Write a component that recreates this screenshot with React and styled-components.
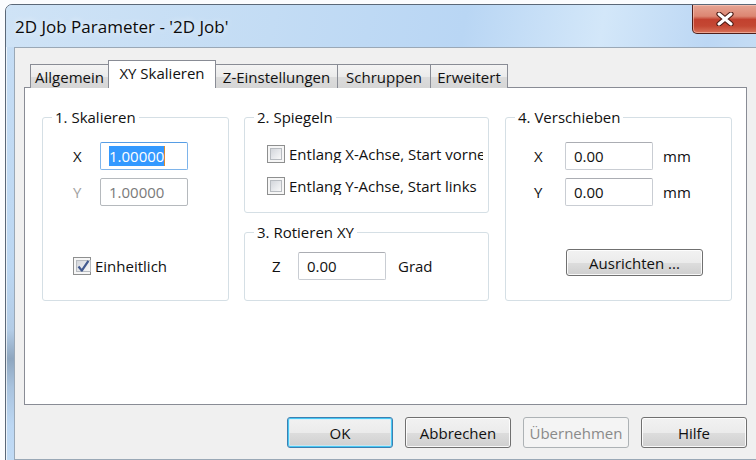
import React from "react";
import styled, { createGlobalStyle, css } from "styled-components";

const GlobalStyle = createGlobalStyle`
  html, body { margin: 0; padding: 0; background: #ffffff; }
  body {
    font-family: "Open Sans", "Noto Sans", "DejaVu Sans", sans-serif;
    font-size: 15px;
    color: #111;
  }
  * { box-sizing: border-box; }
`;

const Screen = styled.div`
  width: 756px;
  height: 460px;
  overflow: hidden;
  padding: 4px 0 0 5px;
  background: #fbfcfe;
`;

const Window = styled.div`
  width: 764px;
  height: 480px;
  border: 1px solid #5b6878;
  border-radius: 7px 7px 0 0;
  padding: 0 8px 0 8px;
  display: flex;
  flex-direction: column;
  background: linear-gradient(
    180deg,
    #c7def5 0%,
    #bcd7f2 55%,
    #b3cce6 68%,
    #8ea6bf 74%,
    #a9c3de 80%,
    #bcd7f3 88%,
    #c4ddf5 100%
  );
  box-shadow: inset 1px 1px 0 rgba(255, 255, 255, 0.7);
`;

const TitleBar = styled.div`
  height: 42px;
  display: flex;
  align-items: flex-start;
  margin: 0 -8px 0 -8px;
  padding-left: 9px;
  border-radius: 6px 6px 0 0;
  background: linear-gradient(
    100deg,
    #cfe3f6 0%,
    #c3dcf4 35%,
    #b9d6f4 60%,
    #d3e7f9 78%,
    #bcd7f4 92%,
    #c6ddf4 100%
  );
`;

const Title = styled.div`
  margin-top: 10px;
  font-size: 17px;
  color: #0b0b0b;
  text-shadow: 0 0 6px rgba(255, 255, 255, 0.9);
`;

const CloseButton = styled.div`
  margin-left: auto;
  margin-right: 8px;
  width: 68px;
  height: 29px;
  border: 1px solid #4f1f1a;
  border-top: none;
  border-radius: 0 0 5px 5px;
  display: flex;
  align-items: center;
  justify-content: center;
  padding-right: 2px;
  background: linear-gradient(
    180deg,
    #e6a493 0%,
    #dc8672 40%,
    #c2412f 52%,
    #c44733 75%,
    #d8735a 100%
  );
  box-shadow: inset 0 0 0 1px rgba(255, 210, 195, 0.55);
`;

const Client = styled.div`
  height: 413px;
  border: 1px solid #9aa8b6;
  background: #f0f0f0;
  padding: 12px 12px 0 9px;
  display: flex;
  flex-direction: column;
`;

const TabStrip = styled.div`
  display: flex;
  align-items: flex-end;
  height: 28px;
  padding-left: 6px;
  margin-bottom: -1px;
  position: relative;
  z-index: 1;
`;

const Tab = styled.div`
  width: ${(p) => p.$w}px;
  margin-right: -1px;
  height: 24px;
  border: 1px solid #898c95;
  border-bottom: none;
  display: flex;
  align-items: center;
  justify-content: center;
  color: #111;
  white-space: nowrap;
  background: linear-gradient(180deg, #f4f4f4 0%, #ebebeb 50%, #dcdcdc 51%, #d6d6d6 100%);
  ${(p) =>
    p.$active &&
    css`
      height: 28px;
      background: #ffffff;
      padding-bottom: 4px;
      position: relative;
      z-index: 2;
    `}
`;

const Panel = styled.div`
  height: 318px;
  border: 1px solid #898c95;
  background: #ffffff;
  padding: 20px 0 0 17px;
  display: grid;
  grid-template-columns: 187px 245px 228px;
  column-gap: 15px;
  align-items: start;
  & > :nth-child(3) { margin-left: 1px; }
`;

const Column = styled.div`
  display: flex;
  flex-direction: column;
  gap: 10px;
`;

const Group = styled.fieldset`
  margin: 0;
  padding: 0;
  min-width: 0;
  height: ${(p) => p.$h}px;
  border: 1px solid #d5dfe5;
  border-radius: 3px;
`;

const Legend = styled.legend`
  margin-left: 9px;
  padding: 0 3px;
  line-height: 18px;
  color: #111;
`;

const GroupBody = styled.div`
  padding: ${(p) => p.$pad};
`;

const FieldRow = styled.div`
  display: flex;
  align-items: center;
  height: 28px;
  & + & { margin-top: 8px; }
`;

const FieldLabel = styled.div`
  width: ${(p) => p.$w}px;
  color: ${(p) => (p.$disabled ? "#a2a2a2" : "#111")};
`;

const TextBox = styled.div`
  width: 88px;
  height: 28px;
  padding: 0 0 0 8px;
  display: flex;
  align-items: center;
  background: #fff;
  border: 1px solid #c9cdd3;
  border-top-color: #abadb3;
  border-radius: 2px;
  color: #111;
  ${(p) =>
    p.$focused &&
    css`
      border-color: #7eb4ea;
      border-top-color: #569de5;
    `}
  ${(p) =>
    p.$disabled &&
    css`
      border-color: #b5b9bd;
      color: #7a7a7a;
    `}
`;

const Selection = styled.span`
  background: #3399ff;
  color: #fff;
  line-height: 20px;
  border-right: 1px solid #e08a2c;
`;

const Unit = styled.div`
  margin-left: ${(p) => p.$gap}px;
  color: #111;
`;

const CheckRow = styled.div`
  display: flex;
  align-items: center;
  height: 18px;
  gap: 4px;
  margin-top: ${(p) => p.$mt || 0}px;
  white-space: nowrap;
  overflow: hidden;
`;

const CheckBox = styled.div`
  flex: none;
  width: 18px;
  height: 18px;
  border: 1px solid #8e8f8f;
  background: #f6f6f6;
  padding: 2px;
  display: flex;
`;

const CheckInner = styled.div`
  flex: 1;
  border: 1px solid #b7bbc0;
  background: linear-gradient(135deg, #d3d6db 0%, #e7e9ec 55%, #f8f8f8 100%);
  display: flex;
  align-items: center;
  justify-content: center;
  overflow: visible;
`;

const CheckText = styled.span`
  color: #111;
  overflow: hidden;
`;

const PushButton = styled.div`
  width: ${(p) => p.$w}px;
  height: ${(p) => p.$h}px;
  margin-top: ${(p) => p.$mt || 0}px;
  margin-left: ${(p) => p.$ml || 0}px;
  display: flex;
  align-items: center;
  justify-content: center;
  border: 1px solid #707070;
  border-radius: 3px;
  color: #111;
  background: linear-gradient(180deg, #f2f2f2 0%, #ebebeb 50%, #dddddd 51%, #cfcfcf 100%);
  box-shadow: inset 0 0 0 1px rgba(255, 255, 255, 0.85);
  ${(p) =>
    p.$default &&
    css`
      border-color: #3c7fb1;
      box-shadow: inset 0 0 0 1px #48c8f4, inset 0 0 0 2px rgba(200, 240, 255, 0.6);
    `}
  ${(p) =>
    p.$disabled &&
    css`
      border-color: #adb2b5;
      background: #f4f4f4;
      color: #8a8a8a;
      box-shadow: none;
    `}
`;

const ButtonBar = styled.div`
  display: flex;
  justify-content: flex-end;
  gap: 12px;
  margin-top: 12px;
`;

const CloseGlyph = () => (
  <svg width="20" height="14" viewBox="0 0 20 14">
    <path d="M4 2 L16 12 M16 2 L4 12" stroke="#4a1a14" strokeWidth="5.2" strokeLinecap="round" />
    <path d="M4 2 L16 12 M16 2 L4 12" stroke="#ffffff" strokeWidth="3" strokeLinecap="round" />
  </svg>
);

const Tick = () => (
  <svg width="13" height="13" viewBox="0 0 13 13" style={{ overflow: "visible" }}>
    <path d="M1.5 6.5 L4.8 10.6 L11.4 0.8" fill="none" stroke="#41598f" strokeWidth="2.2" strokeLinejoin="round" />
  </svg>
);

const Check = ({ checked, children, mt }) => (
  <CheckRow $mt={mt}>
    <CheckBox>
      <CheckInner>{checked && <Tick />}</CheckInner>
    </CheckBox>
    <CheckText>{children}</CheckText>
  </CheckRow>
);

const tabs = [
  { label: "Allgemein", w: 79 },
  { label: "XY Skalieren", w: 108, active: true },
  { label: "Z-Einstellungen", w: 123 },
  { label: "Schruppen", w: 94 },
  { label: "Erweitert", w: 78 },
];

export default function App() {
  return (
    <>
      <GlobalStyle />
      <Screen>
        <Window>
          <TitleBar>
            <Title>2D Job Parameter - '2D Job'</Title>
            <CloseButton>
              <CloseGlyph />
            </CloseButton>
          </TitleBar>
          <Client>
            <TabStrip>
              {tabs.map((t) => (
                <Tab key={t.label} $w={t.w} $active={t.active}>
                  {t.label}
                </Tab>
              ))}
            </TabStrip>
            <Panel>
              <Group $h={193}>
                <Legend>1. Skalieren</Legend>
                <GroupBody $pad="16px 0 0 30px">
                  <FieldRow>
                    <FieldLabel $w={27}>X</FieldLabel>
                    <TextBox $focused>
                      <Selection>1.00000</Selection>
                    </TextBox>
                  </FieldRow>
                  <FieldRow>
                    <FieldLabel $w={27} $disabled>Y</FieldLabel>
                    <TextBox $disabled>1.00000</TextBox>
                  </FieldRow>
                  <Check checked mt={51}>Einheitlich</Check>
                </GroupBody>
              </Group>

              <Column>
                <Group $h={105}>
                  <Legend>2. Spiegeln</Legend>
                  <GroupBody $pad="19px 5px 0 22px">
                    <Check>Entlang X-Achse, Start vorne</Check>
                    <Check mt={14}>Entlang Y-Achse, Start links</Check>
                  </GroupBody>
                </Group>
                <Group $h={78}>
                  <Legend>3. Rotieren XY</Legend>
                  <GroupBody $pad="11px 0 0 27px">
                    <FieldRow>
                      <FieldLabel $w={26}>Z</FieldLabel>
                      <TextBox>0.00</TextBox>
                      <Unit $gap={12}>Grad</Unit>
                    </FieldRow>
                  </GroupBody>
                </Group>
              </Column>

              <Group $h={193}>
                <Legend>4. Verschieben</Legend>
                <GroupBody $pad="16px 0 0 28px">
                  <FieldRow>
                    <FieldLabel $w={31}>X</FieldLabel>
                    <TextBox>0.00</TextBox>
                    <Unit $gap={10}>mm</Unit>
                  </FieldRow>
                  <FieldRow>
                    <FieldLabel $w={31}>Y</FieldLabel>
                    <TextBox>0.00</TextBox>
                    <Unit $gap={10}>mm</Unit>
                  </FieldRow>
                  <PushButton $w={137} $h={27} $mt={43} $ml={32}>
                    Ausrichten ...
                  </PushButton>
                </GroupBody>
              </Group>
            </Panel>
            <ButtonBar>
              <PushButton $w={106} $h={31} $default>OK</PushButton>
              <PushButton $w={106} $h={31}>Abbrechen</PushButton>
              <PushButton $w={106} $h={31} $disabled>Übernehmen</PushButton>
              <PushButton $w={106} $h={31}>Hilfe</PushButton>
            </ButtonBar>
          </Client>
        </Window>
      </Screen>
    </>
  );
}
